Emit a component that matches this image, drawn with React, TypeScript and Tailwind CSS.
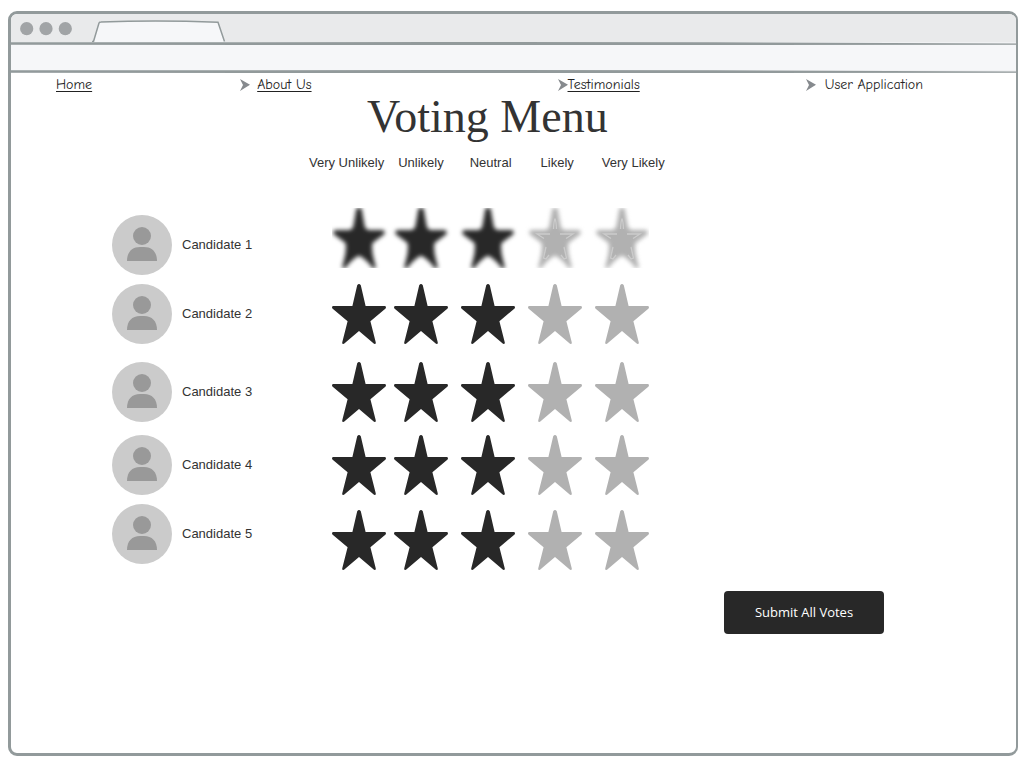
import React from "react";

const STAR =
  "M25.2 1.2Q27 -1 28.8 1.2L33.6 22H52.5Q54.8 22.2 53.6 24.4L38.4 37.2L43.8 58.4Q44 60.4 42 59.8L27 47L12 59.8Q10 60.4 10.2 58.4L15.6 37.2L0.4 24.4Q-0.8 22.2 1.5 22H20.4Z";

const SOFT_STAR =
  "M24.5 0H29.500L32.500 17Q33 21.500 37 22H51Q54 24 52 26.500L40.500 35Q39 42 42.500 54L44 60H40.500Q38 56 34 52.500L29 48.500Q27 47.500 25 48.500L20 52.500Q16 56 13.500 60H10L11.500 54Q15 42 13.500 35L2 26.500Q0 24 3 22H17Q21 21.500 21.500 17Z";

const levels = [
  { label: "Very Unlikely", heading: "", star: "" },
  { label: "Unlikely", heading: "ml-[14px]", star: "ml-2" },
  { label: "Neutral", heading: "ml-[26px]", star: "ml-[13px]" },
  { label: "Likely", heading: "ml-[29px]", star: "ml-[13px]" },
  { label: "Very Likely", heading: "ml-[28px]", star: "ml-[13px]" },
];

const candidates = [
  { name: "Candidate 1", row: "h-[67px]", person: "self-end", stars: "self-start overflow-hidden", soft: true },
  { name: "Candidate 2", row: "mt-[9px]", person: "", stars: "", soft: false },
  { name: "Candidate 3", row: "mt-[18px]", person: "", stars: "", soft: false },
  { name: "Candidate 4", row: "mt-[13px]", person: "", stars: "", soft: false },
  { name: "Candidate 5", row: "mt-[9px] h-[66px]", person: "self-start", stars: "self-end", soft: false },
];

function Rule() {
  return (
    <svg className="block h-[3px] w-full shrink-0" viewBox="0 0 1000 3" preserveAspectRatio="none" aria-hidden="true">
      <rect width="1000" height="3" fill="#f0f1f3" />
      <path d="M0 .3L420 0L700 .2L1000 1.6V2.8L640 3L0 2.8Z" fill="#929a9b" />
    </svg>
  );
}

function Arrow() {
  return (
    <svg className="h-3 w-[10px] shrink-0" viewBox="0 0 10 12" aria-hidden="true">
      <path d="M0 0L10 5.8L0 12L3 6Z" fill="#868a8e" />
    </svg>
  );
}

function Avatar() {
  return (
    <svg className="size-[60px] shrink-0" viewBox="0 0 60 60" aria-hidden="true">
      <circle cx="30" cy="30" r="30" fill="#cbcbcb" />
      <circle cx="30" cy="21" r="9" fill="#999" />
      <path d="M15 46C15 37 20 32 28 32H32C40 32 45 37 45 46Z" fill="#999" />
    </svg>
  );
}

function Star({ filled, soft }: { filled: boolean; soft: boolean }) {
  const color = filled ? "#282828" : "#b1b1b1";
  return (
    <svg className="block h-[60px] w-[54px] overflow-visible" viewBox="0 0 54 60" aria-hidden="true">
      {soft ? (
        <>
          <path d={SOFT_STAR} fill={color} filter="url(#soft)" />
          {!filled && (
            <g fill="none" stroke="#cbcbcb" strokeWidth="1.3" filter="url(#faint)">
              <path d="M25.500 21Q26 12 27 11Q28 12 28.500 21" />
              <path d="M22 26H9L16 30.500" />
              <path d="M32 26H45L38 30.500" />
              <path d="M18 39L15.500 50L18 51L21 47" />
              <path d="M36 39L38.500 50L36 51L33 47" />
            </g>
          )}
        </>
      ) : (
        <path d={STAR} fill={color} />
      )}
    </svg>
  );
}

export default function App() {
  return (
    <div className="flex min-h-screen flex-col bg-white pt-[11px] pr-[6px] pb-3 pl-2 font-['Liberation_Sans',sans-serif] text-[#333]">
      <svg className="absolute size-0" aria-hidden="true">
        <filter id="soft" x="-30%" y="-30%" width="160%" height="160%" colorInterpolationFilters="sRGB">
          <feGaussianBlur stdDeviation="1.9" />
        </filter>
        <filter id="faint" colorInterpolationFilters="sRGB">
          <feGaussianBlur stdDeviation="0.6" />
        </filter>
      </svg>
      <div className="flex flex-1 flex-col overflow-hidden rounded-[9px] border-[3px] border-r-2 border-[#929a9b]">
        <div className="flex h-7 shrink-0 items-end bg-[#e9eaeb] pl-[9px]">
          <svg className="h-7 w-[54px]" viewBox="0 0 54 28" aria-hidden="true">
            <g fill="#a1a4a6">
              <circle cx="6.7" cy="14.7" r="6.6" />
              <circle cx="26" cy="14.7" r="6.6" />
              <circle cx="45.3" cy="14.7" r="6.6" />
            </g>
          </svg>
          <svg className="ml-[18px] h-[22px] w-[134px]" viewBox="0 0 134 22" aria-hidden="true">
            <path d="M1 22L7 3Q7.500 2 9 2Q65 0 126 2.200L133 22Z" fill="#f6f7f9" />
            <path d="M0 21.500H1.500L7 3Q7.500 2 9 2Q65 0 126 2.200L132.500 21.500" fill="none" stroke="#929a9b" strokeWidth="1.500" />
          </svg>
        </div>
        <Rule />
        <div className="h-[25px] shrink-0 bg-[#f6f7f9]" />
        <Rule />
        <nav className="grid h-6 grid-cols-[184fr_317fr_248fr_210fr] pl-[45px] font-['Comic_Sans_MS','Comic_Neue','Comic_Relief',cursive] text-[14px] leading-6 text-[#222]">
          <div className="flex items-center">
            <a href="#home" className="underline underline-offset-2">Home</a>
          </div>
          <div className="flex items-center gap-[7px]">
            <Arrow />
            <a href="#about" className="underline underline-offset-2">About Us</a>
          </div>
          <div className="flex items-center">
            <Arrow />
            <a href="#testimonials" className="underline underline-offset-2">Testimonials</a>
          </div>
          <div className="flex items-center gap-[9px]">
            <Arrow />
            <a href="#application">User Application</a>
          </div>
        </nav>
        <main className="pb-8">
          <h1 className="pl-[356px] font-['Liberation_Serif',serif] text-[46px] leading-10">Voting Menu</h1>
          <div className="mt-4 flex pl-[298px] text-[13px] leading-5">
            {levels.map((l) => (
              <span key={l.label} className={l.heading}>{l.label}</span>
            ))}
          </div>
          <form className="pt-[35px] pl-[101px]" onSubmit={(e) => e.preventDefault()}>
            {candidates.map((c) => (
              <div key={c.name} role="radiogroup" aria-label={c.name} className={`flex ${c.row}`}>
                <div className={`flex w-[220px] items-center gap-[10px] text-[13px] leading-5 ${c.person}`}>
                  <Avatar />
                  <span>{c.name}</span>
                </div>
                <div className={`flex ${c.stars}`}>
                  {levels.map((l, i) => (
                    <label key={l.label} className={`relative block cursor-pointer ${l.star}`}>
                      <input type="radio" name={c.name} aria-label={l.label} defaultChecked={i === 2} className="sr-only" />
                      <Star filled={i < 3} soft={c.soft} />
                    </label>
                  ))}
                </div>
              </div>
            ))}
            <button
              type="submit"
              className="mt-[21px] ml-[612px] block h-[43px] w-40 rounded bg-[#282828] font-['Open_Sans',sans-serif] text-[13px] text-white"
            >
              Submit All Votes
            </button>
          </form>
        </main>
      </div>
    </div>
  );
}
